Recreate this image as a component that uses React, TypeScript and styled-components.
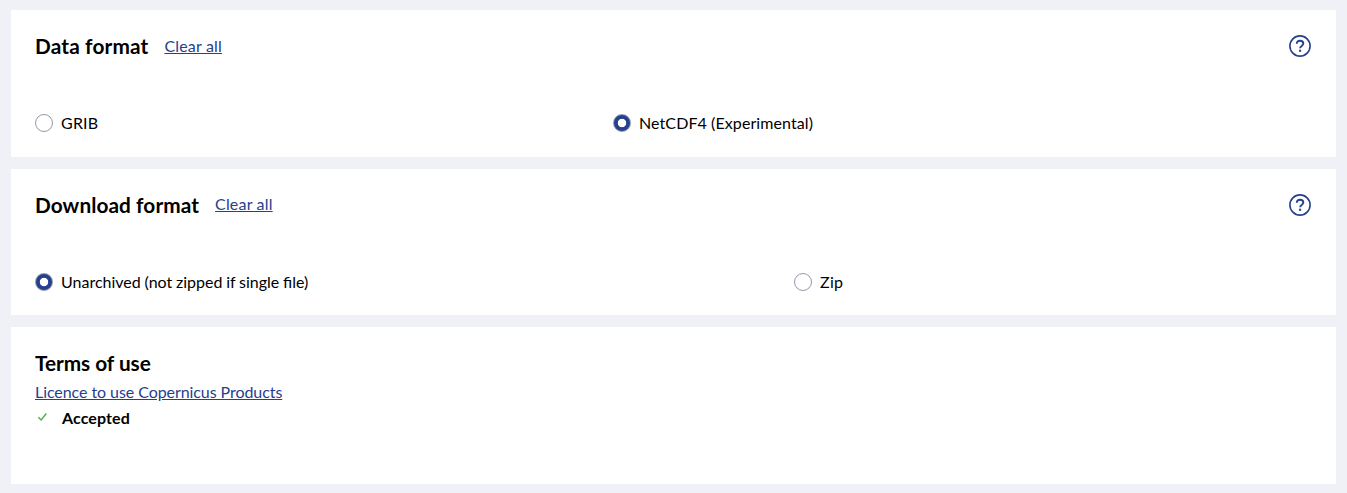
import React, { useState } from "react";
import styled, { createGlobalStyle } from "styled-components";

const GlobalStyle = createGlobalStyle`
  *, *::before, *::after { box-sizing: border-box; }
  body {
    margin: 0;
    background: #f0f1f7;
    color: #000;
    font-family: Lato, "Liberation Sans", sans-serif;
    font-size: 16px;
    line-height: 24px;
  }
`;

const Page = styled.main`
  display: flex;
  flex-direction: column;
  gap: 12px;
  min-height: 493px;
  padding: 10px 11px 9px;
`;

const Card = styled.section<{ $height: number }>`
  height: ${(p) => p.$height}px;
  padding: 24px;
  background: #fff;
`;

const CardHeader = styled.header`
  display: flex;
  align-items: flex-start;
  height: 24px;
`;

const Title = styled.h2<{ $tracking?: number }>`
  margin: 0;
  font-size: 20.8px;
  font-weight: 700;
  line-height: 24px;
  letter-spacing: ${(p) => p.$tracking ?? 0}px;
`;

const ClearButton = styled.button<{ $lineHeight: number }>`
  margin: 0 0 0 16px;
  padding: 0;
  border: 0;
  background: none;
  color: #25408f;
  font: inherit;
  line-height: ${(p) => p.$lineHeight}px;
  letter-spacing: 0.18px;
  text-decoration: underline;
  cursor: pointer;
`;

const HelpButton = styled.button`
  display: flex;
  margin: 1px 1px 0 auto;
  padding: 0;
  border: 0;
  background: none;
  color: #25408f;
  cursor: pointer;
`;

const Options = styled.div<{ $firstColumn: number }>`
  display: grid;
  grid-template-columns: ${(p) => p.$firstColumn}px 1fr;
  margin-top: 53px;
`;

const Option = styled.label<{ $tracking?: number; $wordSpacing?: number }>`
  display: flex;
  align-items: center;
  gap: 8px;
  letter-spacing: ${(p) => (p.$tracking ? `${p.$tracking}px` : "normal")};
  word-spacing: ${(p) => p.$wordSpacing ?? 0}px;
  cursor: pointer;
`;

const Radio = styled.input`
  appearance: none;
  width: 18px;
  height: 18px;
  margin: 0;
  border: 1px solid #9599a8;
  border-radius: 50%;
  background: #fff;

  &:checked {
    background: radial-gradient(circle, #fff 3.8px, #25408f 4.6px);
    background-origin: border-box;
  }
`;

const LicenceLink = styled.a`
  display: block;
  width: fit-content;
  margin-top: 5px;
  color: #25408f;
  letter-spacing: -0.07px;
  text-decoration: underline;
`;

const Status = styled.div`
  display: flex;
  align-items: center;
  gap: 14px;
  margin-top: 2px;
  padding-left: 2px;
  font-weight: 700;
  letter-spacing: 0.1px;

  svg { margin-bottom: 2px; }
`;

const HelpIcon = () => (
  <svg width="22" height="22" viewBox="0 0 22 22" fill="none" stroke="currentColor" aria-hidden="true">
    <circle cx="11" cy="11" r="10.1" strokeWidth="1.6" />
    <path d="M7.8 8.7C7.8 6.9 9.1 5.8 11 5.8s3.3 1.1 3.3 2.8c0 2.3-3.2 2.3-3.2 4.6" strokeWidth="1.9" />
    <path d="M11.1 14.7v2.1" strokeWidth="2.1" />
  </svg>
);

const CheckIcon = () => (
  <svg width="11" height="11" viewBox="0 0 11 11" fill="none" aria-hidden="true">
    <path d="M1.3 5.2l2.8 2.8 5.2-6.5" stroke="#4caf50" strokeWidth="1.4" />
  </svg>
);

interface Choice {
  label: string;
  tracking?: number;
  wordSpacing?: number;
}

interface FormatProps {
  title: string;
  titleTracking: number;
  options: Choice[];
  initial: string;
  height: number;
  firstColumn: number;
  clearLineHeight: number;
}

function FormatCard({ title, titleTracking, options, initial, height, firstColumn, clearLineHeight }: FormatProps) {
  const [value, setValue] = useState(initial);
  return (
    <Card $height={height}>
      <CardHeader>
        <Title $tracking={titleTracking}>{title}</Title>
        <ClearButton type="button" $lineHeight={clearLineHeight} onClick={() => setValue("")}>Clear all</ClearButton>
        <HelpButton type="button" aria-label={`Help: ${title}`}><HelpIcon /></HelpButton>
      </CardHeader>
      <Options $firstColumn={firstColumn}>
        {options.map(({ label, tracking, wordSpacing }) => (
          <Option key={label} $tracking={tracking} $wordSpacing={wordSpacing}>
            <Radio type="radio" name={title} checked={value === label} onChange={() => setValue(label)} />
            {label}
          </Option>
        ))}
      </Options>
    </Card>
  );
}

export default function App() {
  return (
    <>
      <GlobalStyle />
      <Page>
        <FormatCard
          title="Data format"
          titleTracking={0.15}
          options={[
            { label: "GRIB", tracking: 0.2 },
            { label: "NetCDF4 (Experimental)", tracking: 0.09 },
          ]}
          initial="NetCDF4 (Experimental)"
          height={147}
          firstColumn={578}
          clearLineHeight={24}
        />
        <FormatCard
          title="Download format"
          titleTracking={0.08}
          options={[
            { label: "Unarchived (not zipped if single file)", wordSpacing: -0.35 },
            { label: "Zip", tracking: 0.3 },
          ]}
          initial="Unarchived (not zipped if single file)"
          height={146}
          firstColumn={759}
          clearLineHeight={22}
        />
        <Card $height={157}>
          <Title $tracking={-0.04}>Terms of use</Title>
          <LicenceLink href="#licence">Licence to use Copernicus Products</LicenceLink>
          <Status><CheckIcon />Accepted</Status>
        </Card>
      </Page>
    </>
  );
}
